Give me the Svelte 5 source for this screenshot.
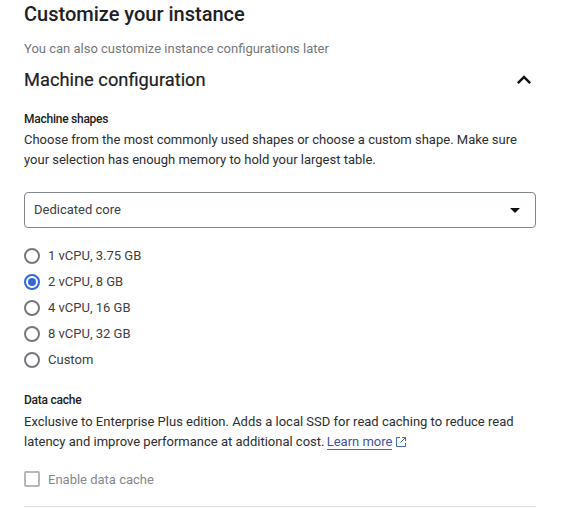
<script lang="ts">
  const shapes = ['1 vCPU, 3.75 GB', '2 vCPU, 8 GB', '4 vCPU, 16 GB', '8 vCPU, 32 GB', 'Custom'];
  let shape = $state('2 vCPU, 8 GB');
</script>

<main class="page">
  <h1>Customize your instance</h1>
  <p class="sub">You can also customize instance configurations later</p>

  <div class="section-head">
    <h2>Machine configuration</h2>
    <svg class="chevron" width="28" height="28" viewBox="0 0 24 24" aria-hidden="true">
      <path d="M7.41 15.41 12 10.83l4.59 4.58L18 14l-6-6-6 6z" />
    </svg>
  </div>

  <h3>Machine shapes</h3>
  <p class="body">
    Choose from the most commonly used shapes or choose a custom shape. Make sure<br />
    your selection has enough memory to hold your largest table.
  </p>

  <div class="select">
    <span class="label">Dedicated core</span>
    <svg width="24" height="24" viewBox="0 0 24 24" aria-hidden="true"><path d="M7 10l5 5 5-5z" /></svg>
  </div>

  <div class="radios">
    {#each shapes as item}
      <button class="radio-row" type="button" onclick={() => (shape = item)}>
        <span class="radio" class:on={shape === item}></span>
        <span class="label">{item}</span>
      </button>
    {/each}
  </div>

  <h3 class="cache">Data cache</h3>
  <p class="body">
    Exclusive to Enterprise Plus edition. Adds a local SSD for read caching to reduce read<br />
    latency and improve performance at additional cost.
    <a href="#learn">Learn more</a><svg class="ext" width="12" height="12" viewBox="0 0 12 12" aria-hidden="true">
      <path d="M5 1.5H1.5v9h9V7M7 1.5h3.5V5M10.5 1.5 5.5 6.5" />
    </svg>
  </p>

  <div class="check-row">
    <span class="check"></span>
    <span>Enable data cache</span>
  </div>

  <hr />
</main>

<style>
  :global(body) {
    background: #fff;
  }

  .page {
    width: 512px;
    padding: 0 0 0 24px;
    height: 508px;
    overflow: hidden;
    font-family: Roboto, "Liberation Sans", sans-serif;
    color: #202124;
  }

  h1 {
    margin: 0;
    padding-top: 2px;
    font-size: 20px;
    line-height: 24px;
    font-weight: 500;
  }

  .sub {
    margin: 13px 0 0;
    font-size: 13px;
    line-height: 20px;
    color: #73777c;
  }

  .section-head {
    display: flex;
    align-items: center;
    justify-content: space-between;
    margin-top: 7px;
    height: 28px;
  }

  h2 {
    margin: 0;
    font-size: 18.3px;
    line-height: 24px;
    font-weight: 400;
    -webkit-text-stroke: 0.2px #202124;
  }

  .chevron {
    fill: #111;
    margin-right: -2px;
  }

  h3 {
    margin: 15px 0 0;
    font-size: 12px;
    letter-spacing: -0.25px;
    line-height: 20px;
    font-weight: 500;
    padding-bottom: 1px;
  }

  .body {
    margin: 0;
    font-size: 13px;
    line-height: 20px;
    color: #2b2e31;
  }

  .label {
    padding-bottom: 2px;
  }

  .select {
    display: flex;
    align-items: center;
    justify-content: space-between;
    box-sizing: border-box;
    height: 36px;
    margin-top: 22px;
    padding: 0 12px 0 9px;
    border: 1px solid #80868b;
    border-radius: 4px;
    font-size: 13px;
    color: #3c4043;
  }

  .select svg {
    fill: #111;
    margin-right: -4px;
  }

  .radios {
    display: flex;
    flex-direction: column;
    margin-top: 15px;
  }

  .radio-row {
    display: flex;
    align-items: center;
    gap: 8px;
    height: 26px;
    padding: 0;
    border: 0;
    background: none;
    font: inherit;
    font-size: 13px;
    color: #3c4043;
    text-align: left;
  }

  .radio {
    position: relative;
    box-sizing: border-box;
    width: 16px;
    height: 16px;
    border: 2px solid #75797d;
    border-radius: 50%;
  }

  .radio.on {
    border-color: #3367d6;
  }

  .radio.on::after {
    content: "";
    position: absolute;
    inset: 2px;
    border-radius: 50%;
    background: #3367d6;
  }

  .cache {
    margin-top: 17px;
    padding-bottom: 2px;
  }

  a {
    color: #3f51a5;
    text-decoration: none;
    border-bottom: 1px solid #3f6cb0;
    margin-left: -1px;
  }

  .ext {
    margin-left: 3px;
    vertical-align: -2px;
    fill: none;
    stroke: #3f6cb0;
    stroke-width: 1;
  }

  .check-row {
    display: flex;
    align-items: center;
    gap: 8px;
    margin-top: 19px;
    font-size: 13px;
    color: #85888c;
  }

  .check {
    box-sizing: border-box;
    width: 16px;
    height: 16px;
    border: 2px solid #b5b7ba;
    border-radius: 2px;
  }

  hr {
    margin: 19px 0 0;
    border: 0;
    border-top: 1px solid #dadce0;
  }
</style>
